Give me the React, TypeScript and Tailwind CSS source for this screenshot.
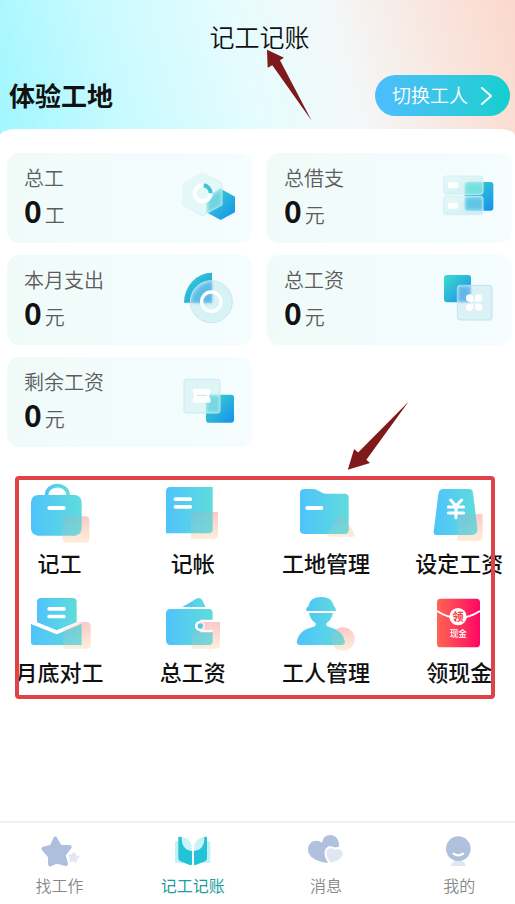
import type { ReactNode } from "react";

function Gradients() {
  return (
    <svg className="absolute size-0" aria-hidden="true">
      <defs>
        <linearGradient id="deep" x1="0" y1="0" x2="1" y2="1">
          <stop offset="0" stopColor="#3fdcc8" />
          <stop offset="0.5" stopColor="#2ab4dc" />
          <stop offset="1" stopColor="#168fee" />
        </linearGradient>
        <linearGradient id="glass" x1="0" y1="0" x2="1" y2="1">
          <stop offset="0" stopColor="#e2f6f6" stopOpacity="0.75" />
          <stop offset="1" stopColor="#bdeaf0" stopOpacity="0.7" />
        </linearGradient>
        <linearGradient id="glassEdge" x1="0" y1="0" x2="1" y2="1">
          <stop offset="0" stopColor="#f4ffff" />
          <stop offset="1" stopColor="#bfe6ef" />
        </linearGradient>
        <linearGradient id="aqua" x1="0" y1="0" x2="1" y2="0">
          <stop offset="0" stopColor="#4fc3fb" />
          <stop offset="1" stopColor="#5fdcdc" />
        </linearGradient>
        <linearGradient id="blush" x1="0" y1="0" x2="0" y2="1">
          <stop offset="0" stopColor="#f98d92" stopOpacity="0.38" />
          <stop offset="1" stopColor="#fbd9a8" stopOpacity="0.34" />
        </linearGradient>
        <linearGradient id="packet" x1="0" y1="0" x2="1" y2="0">
          <stop offset="0" stopColor="#ff6553" />
          <stop offset="1" stopColor="#ff0763" />
        </linearGradient>
        <filter id="soft" x="-20%" y="-20%" width="140%" height="140%">
          <feGaussianBlur stdDeviation="5" />
        </filter>
      </defs>
    </svg>
  );
}

/* A pale accent shape that sits behind the icon body and tints it slightly. */
function Tinted({ accent, children }: { accent: string; children: ReactNode }) {
  return (
    <>
      <path d={accent} fill="url(#blush)" />
      {children}
      <path d={accent} fill="url(#blush)" opacity="0.45" />
    </>
  );
}

const hexagonIcon = (
  <>
    <path d="M119 59 162 83V130L119 153 76 130V83Z" fill="url(#deep)" />
    <path d="M64 10 123 42V108L64 140 5 108V42Z" fill="#e0f5f6" fillOpacity="0.75" stroke="url(#glassEdge)" strokeWidth="3" strokeLinejoin="round" />
    <path d="M121 58V108L82 129V90Z" fill="#45c8d8" fillOpacity="0.6" filter="url(#soft)" />
    <circle cx="65" cy="73" r="24" fill="none" stroke="#fff" strokeWidth="12" />
    <path d="M68 49A24 24 0 0 1 89 73" fill="none" stroke="#3cc5d2" strokeWidth="12" />
    <circle cx="85" cy="82" r="7" fill="#fff" />
  </>
);

const cardsIcon = (
  <>
    <rect x="71" y="39" width="86" height="86" rx="9" fill="url(#deep)" />
    <rect x="8" y="21" width="118" height="55" rx="8" fill="url(#glass)" stroke="#d5eff2" strokeWidth="3" />
    <rect x="8" y="82" width="118" height="55" rx="8" fill="url(#glass)" stroke="#d5eff2" strokeWidth="3" />
    <rect x="75" y="43" width="48" height="31" rx="5" fill="#62dedb" fillOpacity="0.7" filter="url(#soft)" />
    <rect x="75" y="86" width="48" height="35" rx="5" fill="#43bce4" fillOpacity="0.7" filter="url(#soft)" />
    <rect x="21" y="39" width="31" height="19" rx="6" fill="#fff" />
    <rect x="21" y="101" width="31" height="18" rx="6" fill="#fff" />
  </>
);

const gaugeIcon = (
  <>
    <path d="M9 95A84 90 0 0 1 93 5V95Z" fill="url(#deep)" />
    <circle cx="91" cy="92" r="63" fill="#cdeff2" fillOpacity="0.72" stroke="#c4e9ef" strokeWidth="3" />
    <path d="M32 95A62 62 0 0 1 93 34V95Z" fill="#4bb2e5" fillOpacity="0.75" filter="url(#soft)" />
    <circle cx="91" cy="92" r="29" fill="none" stroke="#fff" strokeWidth="10" />
  </>
);

const cloverIcon = (
  <>
    <rect x="9" y="12" width="81" height="82" rx="9" fill="url(#deep)" />
    <rect x="49" y="43" width="104" height="104" rx="8" fill="#d3eff4" fillOpacity="0.8" stroke="#bde5ee" strokeWidth="3" />
    <rect x="52" y="46" width="36" height="46" rx="5" fill="#52ade8" fillOpacity="0.8" filter="url(#soft)" />
    <g fill="#fff">
      <path d="M97 92H86A11 11 0 1 1 97 81Z" />
      <path d="M102 92V81A11 11 0 1 1 113 92Z" />
      <path d="M97 98V109A11 11 0 1 1 86 98Z" />
      <path d="M102 98H113A11 11 0 1 1 102 109Z" />
    </g>
  </>
);

const ticketIcon = (
  <>
    <rect x="75" y="65" width="84" height="84" rx="9" fill="url(#deep)" />
    <rect x="9" y="19" width="108" height="101" rx="7" fill="#d8f1f3" fillOpacity="0.75" stroke="#c8e9ee" strokeWidth="3" />
    <rect x="78" y="69" width="36" height="48" rx="5" fill="#5ed1db" fillOpacity="0.7" filter="url(#soft)" />
    <path d="M41 47H83Q89 47 89 53V57Q80 68 89 79V83Q89 89 83 89H41Q35 89 35 83V79Q44 68 35 57V53Q35 47 41 47Z" fill="#fff" />
    <path d="M49 67H76" stroke="#d5e9ec" strokeWidth="4" strokeLinecap="round" />
  </>
);

const briefcaseIcon = (
  <Tinted accent="M110 97H166Q178 97 178 109V164Q178 176 166 176H110Q98 176 98 164V109Q98 97 110 97Z">
    <path d="M50 36V31A32 26 0 0 1 114 31V36" fill="none" stroke="url(#aqua)" strokeWidth="11" />
    <rect x="3" y="33" width="152" height="122" rx="21" fill="url(#aqua)" />
    <rect x="52" y="66" width="55" height="12" rx="6" fill="#fff" />
  </Tinted>
);

const notebookIcon = (
  <Tinted accent="M84 84H165V153Q165 165 153 165H84Z">
    <path d="M22 9H149V136Q149 148 137 148H9V22Q9 9 22 9Z" fill="url(#aqua)" />
    <rect x="32" y="40" width="55" height="11" rx="5" fill="#fff" />
    <rect x="32" y="63" width="55" height="11" rx="5" fill="#fff" />
  </Tinted>
);

const folderIcon = (
  <Tinted accent="M128 96Q135 87 142 96L176 150Q180 158 172 158H99Q91 158 95 150Z">
    <path d="M25 15H52Q60 15 67 20L80 27Q84 29 90 29H146Q158 29 158 41V137Q158 150 145 150H25Q12 150 12 137V28Q12 15 25 15Z" fill="url(#aqua)" />
    <rect x="28" y="66" width="54" height="12" rx="6" fill="#fff" />
  </Tinted>
);

const wageIcon = (
  <Tinted accent="M85 91H161V158Q161 171 149 171H85Z">
    <path d="M44 15H120Q130 15 132 26L145 133Q146 153 128 153H22Q13 153 14 143L28 30Q30 15 44 15Z" fill="url(#aqua)" />
    <path d="M65 48 81 66 98 48M58 69H104M58 87H104M81 66V101" fill="none" stroke="#fff" strokeWidth="9" strokeLinecap="round" strokeLinejoin="round" />
  </Tinted>
);

const mailIcon = (
  <Tinted accent="M100 107 146 87H168Q182 87 182 101V155Q182 167 170 167H100Z">
    <path d="M33 15H128Q140 15 140 27V88L80 112 21 88V27Q21 15 33 15Z" fill="url(#aqua)" />
    <path d="M3 93 80 124 155 93V156H12Q3 156 3 147Z" fill="url(#aqua)" />
    <path d="M8 87 80 118 152 87" fill="none" stroke="#fff" strokeWidth="8" />
    <rect x="52" y="42" width="55" height="11" rx="5" fill="#fff" />
    <rect x="52" y="65" width="55" height="11" rx="5" fill="#fff" />
  </Tinted>
);

const walletIcon = (
  <Tinted accent="M112 87H171V155Q171 167 159 167H86V115H149V111H112Z">
    <path d="M58 42 100 17Q112 12 118 22L128 42Z" fill="url(#aqua)" />
    <path d="M23 48H137Q149 48 149 60V83H112A16 16 0 0 0 112 115H149V144Q149 156 137 156H23Q9 156 9 142V62Q9 48 23 48Z" fill="url(#aqua)" />
    <path d="M112 83H149M112 115H149" stroke="#fff" strokeWidth="5" />
    <circle cx="112" cy="99" r="11" fill="#4fc8e8" stroke="#fff" strokeWidth="6" />
  </Tinted>
);

const workerIcon = (
  <Tinted accent="M106 138A35 35 0 1 1 176 138A35 35 0 1 1 106 138Z">
    <path d="M31 54Q29 45 37 40Q42 12 75 12Q109 12 114 40Q121 45 120 54Z" fill="url(#aqua)" />
    <path d="M39 60H111Q107 81 91 91V97Q93 101 102 103Q141 112 147 148Q147 154 139 156H10Q2 154 2 148Q8 112 48 103Q57 101 59 97V91Q43 81 39 60Z" fill="url(#aqua)" />
  </Tinted>
);

const packetIcon = (
  <>
    <rect x="24" y="17" width="129" height="146" rx="11" fill="url(#packet)" />
    <path d="M24 54Q88 96 153 54" fill="none" stroke="#fff" strokeWidth="6" />
    <circle cx="87" cy="71" r="26" fill="#fff" />
    <text x="87" y="83" textAnchor="middle" fontSize="34" fontWeight="700" fill="#f23e3a">领</text>
    <text x="88" y="132" textAnchor="middle" fontSize="26" fontWeight="500" fill="#fff">现金</text>
  </>
);

const starIcon = (
  <>
    <path d="M76 14 90 38 119 39 101 62 108 90 80 83 60 91 60 67 40 44 65 38Z" fill="#adbfdd" stroke="#adbfdd" strokeWidth="12" strokeLinejoin="round" />
    <path d="M132 56 137 65 146 68 139 75 138 84 130 80 120 81 122 73 118 64 127 63Z" fill="#e2e7f4" stroke="#e2e7f4" strokeWidth="5" strokeLinejoin="round" />
  </>
);

const bookIcon = (
  <>
    <path d="M36 22H60V88L36 86ZM118 22H142V86L118 88Z" fill="#c3f0f4" />
    <path d="M46 9Q46 7 56 9L87 50V89Q87 95 80 93L52 82Q46 79 46 73Z" fill="#24c2d6" />
    <path d="M132 9Q132 7 122 9L93 50V89Q93 95 98 93L126 82Q132 79 132 73Z" fill="#24c2d6" />
    <path d="M56 9Q88 13 87 51Q55 48 56 9ZM124 9Q92 13 93 51Q125 48 124 9Z" fill="#c8f4f6" />
  </>
);

const heartsIcon = (
  <>
    <path d="M96 87Q49 82 38 58Q31 36 47 24Q64 15 78 26Q81 4 103 3Q126 5 129 29Q132 59 96 87Z" fill="#b0c1de" />
    <path d="M104 86Q89 68 92 52Q98 36 116 47Q136 41 141 57Q141 78 104 86Z" fill="#e1e6f3" stroke="#fff" strokeWidth="12" />
    <path d="M104 86Q89 68 92 52Q98 36 116 47Q136 41 141 57Q141 78 104 86Z" fill="#e1e6f3" />
  </>
);

const faceIcon = (
  <>
    <path d="M65 96Q68 80 88 80T111 96Z" fill="#e1e6f3" />
    <circle cx="88" cy="44" r="37" fill="#b0c1de" />
    <path d="M74 59Q88 69 102 59" fill="none" stroke="#fff" strokeWidth="7" strokeLinecap="round" />
  </>
);

const stats = [
  { label: "总工", unit: "工", icon: hexagonIcon },
  { label: "总借支", unit: "元", icon: cardsIcon },
  { label: "本月支出", unit: "元", icon: gaugeIcon },
  { label: "总工资", unit: "元", icon: cloverIcon },
  { label: "剩余工资", unit: "元", icon: ticketIcon },
];

const actions = [
  { label: "记工", icon: briefcaseIcon },
  { label: "记帐", icon: notebookIcon },
  { label: "工地管理", icon: folderIcon },
  { label: "设定工资", icon: wageIcon },
  { label: "月底对工", icon: mailIcon },
  { label: "总工资", icon: walletIcon },
  { label: "工人管理", icon: workerIcon },
  { label: "领现金", icon: packetIcon },
];

const tabs = [
  { label: "找工作", icon: starIcon, active: false },
  { label: "记工记账", icon: bookIcon, active: true },
  { label: "消息", icon: heartsIcon, active: false },
  { label: "我的", icon: faceIcon, active: false },
];

function StatCard({ label, unit, icon }: { label: string; unit: string; icon: ReactNode }) {
  return (
    <div className="flex h-[90px] items-center justify-between rounded-xl bg-linear-to-r from-[#f0fbf9] to-[#f5fdff] pr-[13px] pl-[17px]">
      <div>
        <p className="text-[20px] leading-6 font-[350] text-[#5c5c5c]">{label}</p>
        <p className="mt-1 flex items-baseline gap-[3px] leading-8">
          <span className="text-[30px] font-bold text-[#111]">0</span>
          <span className="text-[20px] font-[350] text-[#5c5c5c]">{unit}</span>
        </p>
      </div>
      <svg viewBox="0 0 174 174" className="size-[58px]" aria-hidden="true">{icon}</svg>
    </div>
  );
}

export default function App() {
  return (
    <div className="relative flex min-h-screen flex-col overflow-hidden bg-white font-[family-name:'Noto_Sans_CJK_SC','Noto_Sans',sans-serif] text-[#111]">
      <Gradients />
      <header className="relative bg-[linear-gradient(75deg,#a0f6ff_0%,#c6faff_22%,#e6fcfe_48%,#f3f8f8_66%,#f8e8e2_82%,#fcd8cc_100%)] pb-[29px]">
        <h1 className="pt-4 text-center text-[25px] leading-10 font-[350]">
          <span className="pl-1">记工记账</span>
        </h1>
        <div className="mt-[19px] flex h-[41px] items-center justify-between pr-[5px] pl-[9px]">
          <h2 className="pb-[2px] text-[26px] leading-10 font-bold">体验工地</h2>
          <button type="button" className="flex h-[41px] w-[135px] items-center justify-between rounded-full bg-linear-to-r from-[#4cbdfd] to-[#10cfce] pr-[18px] pl-[17px] text-[19px] font-[350] text-white">
            切换工人
            <svg viewBox="0 0 12 20" className="h-5 w-3" fill="none" stroke="currentColor" strokeWidth="2" strokeLinecap="round" strokeLinejoin="round" aria-hidden="true">
              <path d="M2 2 11 10 2 18" />
            </svg>
          </button>
        </div>
      </header>

      <main className="relative -mt-4 flex-1 rounded-[16px_16px_0_0/7px_7px_0_0] bg-white pt-6">
        <section className="grid grid-cols-2 gap-x-[15px] gap-y-3 pr-[3px] pl-[7px]">
          {stats.map((s) => (
            <StatCard key={s.label} {...s} />
          ))}
        </section>

        <section className="relative mt-[29px] pt-2 pb-3">
          <div className="-mr-[11px] -ml-[7px] grid grid-cols-4">
            {actions.map((a) => (
              <button key={a.label} type="button" className="flex h-[109px] flex-col items-center gap-[2px] text-[22px] leading-8 font-medium whitespace-nowrap">
                <svg viewBox="0 0 180 180" className="size-[60px] overflow-visible" aria-hidden="true">{a.icon}</svg>
                <span>{a.label}</span>
              </button>
            ))}
          </div>
          <div className="pointer-events-none absolute top-0 right-5 left-[15px] h-[223px] rounded-sm border-4 border-[#e04347]" />
          <svg viewBox="0 0 186 208" className="pointer-events-none absolute -top-[75px] left-1/2 ml-[89px] h-[69px] w-[62px]" aria-hidden="true">
            <path d="M185 2 58 177 69 187 2 207 21 145 33 155Z" fill="#80191c" />
          </svg>
        </section>
        <svg viewBox="0 0 138 216" className="pointer-events-none absolute -top-20 left-1/2 ml-2 h-[72px] w-[46px]" aria-hidden="true">
          <path d="M3 2 54 26 42 34 137 215 19 49 5 56Z" fill="#80191c" />
        </svg>
      </main>

      <nav className="border-t-2 border-[#f0f0f0] bg-white">
        <div className="-mr-[11px] -ml-[7px] grid grid-cols-4 pt-[11px] pb-[7px]">
          {tabs.map((t) => (
            <a key={t.label} href="#" className={`flex flex-col items-center gap-[3px] text-[16px] leading-6 ${t.active ? "text-[#1c9da0]" : "font-[350] text-[#888]"}`}>
              <svg viewBox="0 0 180 108" className="h-9 w-[60px]" aria-hidden="true">{t.icon}</svg>
              <span>{t.label}</span>
            </a>
          ))}
        </div>
      </nav>
    </div>
  );
}
